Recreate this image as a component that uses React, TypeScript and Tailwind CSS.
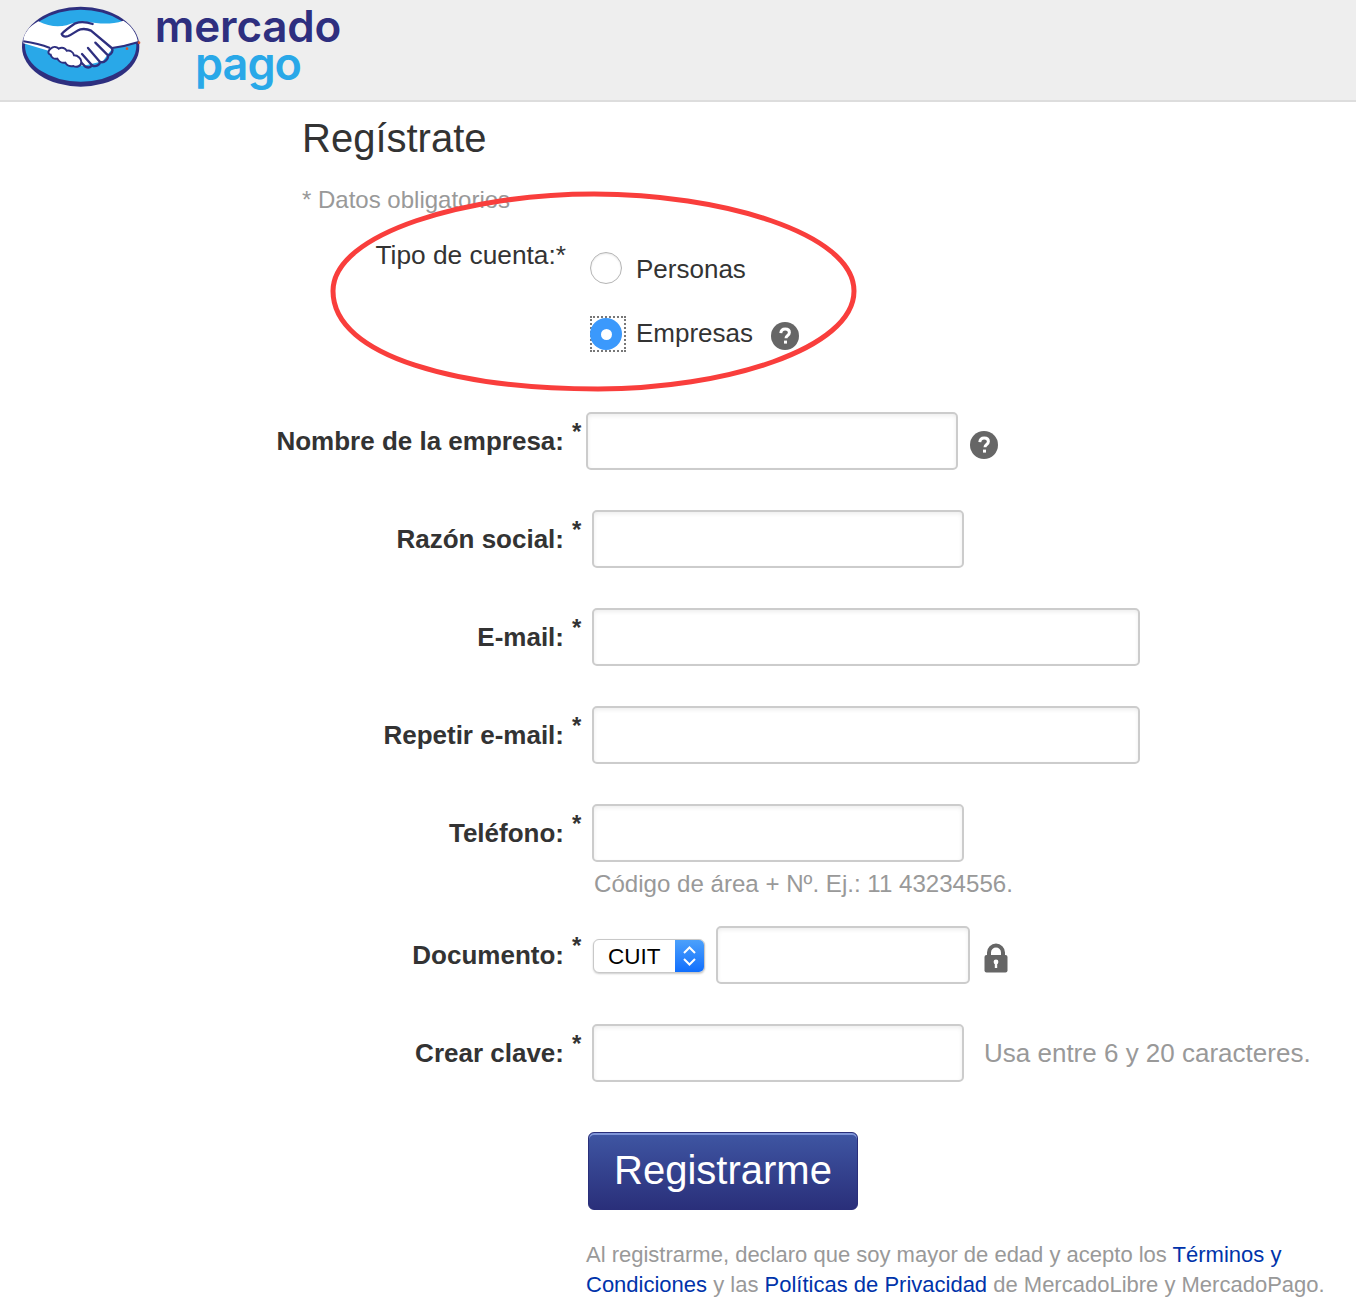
import React from "react";

const font = { fontFamily: '"Liberation Sans", Arial, sans-serif' };

const HelpIcon = () => (
  <svg width="28" height="28" viewBox="0 0 28 28" className="block">
    <circle cx="14" cy="14" r="14" fill="#666666" />
    <path d="M9.800 11.200c.2-2.800 2-4.200 4.400-4.200 2.500 0 4.200 1.400 4.200 3.500 0 1.600-.9 2.400-2 3.200-1 .7-1.400 1.200-1.400 2.500" fill="none" stroke="#fff" strokeWidth="3" />
    <rect x="13" y="18.600" width="3" height="3" fill="#fff" />
  </svg>
);

const LockIcon = () => (
  <svg width="24" height="30" viewBox="0 0 24 30" className="block">
    <path d="M5 13V9.500a7 7 0 0 1 14 0V13" fill="none" stroke="#666666" strokeWidth="4" />
    <rect x="0.500" y="12" width="23" height="17.500" rx="2" fill="#666666" />
    <circle cx="12" cy="19" r="2.400" fill="#fff" />
    <rect x="10.800" y="19" width="2.400" height="6" fill="#fff" />
  </svg>
);

const Logo = () => (
  <svg width="124" height="84" viewBox="0 0 372 252" className="block shrink-0">
    <ellipse cx="182" cy="128" rx="176" ry="120" fill="#2e2f7f" />
    <ellipse cx="182" cy="125" rx="167" ry="108" fill="#29a8e8" />
    {/* white band behind the hands */}
    <path d="M55 52c30 16 60 18 85 12 20-8 40-12 60-10 35 4 70 10 110-4 25 16 40 38 44 64l-76 18-30 40-60 14-100-45-78-23c-2-25 15-50 45-66z" fill="#fff" />
    <path d="M10 112c30 4 55 10 80 20" fill="none" stroke="#2e2f7f" strokeWidth="6" />
    <path d="M276 132c30-4 55-10 80-18" fill="none" stroke="#2e2f7f" strokeWidth="6" />
    {/* hands */}
    <g fill="none" stroke="#2e2f7f" strokeWidth="7" strokeLinecap="round" strokeLinejoin="round">
      <path d="M218 60c-18-6-36-8-52-2-12 8-30 20-41 32 4 8 12 9 20 6 14-6 24-16 36-20 12-2 24 0 32 4l62 52c6 8 0 18-10 22" />
      <path d="M226 116l38 38c2 10-10 24-24 20l-36-42" />
      <path d="M240 174c0 8-12 16-24 10l-30-34" />
      <path d="M216 184c-4 6-12 8-20 4l-14-14" />
    </g>
    <path d="M92 134c8-8 18-6 24 0 10-6 20-2 24 6 10-2 20 4 22 14 12 0 22 10 22 20 0 12-14 18-24 12-10 2-20-2-24-10-10 2-20-4-24-12-10 2-18-4-20-12-10-2-8-12 0-18z" fill="#fff" stroke="#2e2f7f" strokeWidth="6" />
    <circle cx="321" cy="134" r="4" fill="#d9552b" />
    <circle cx="357" cy="116" r="4" fill="#d9552b" />
  </svg>
);

const Row = ({ label, className, children }: { label: string; className: string; children: React.ReactNode }) => (
  <div className={`flex items-start ${className}`}>
    <div className="w-[564px] shrink-0 text-right text-[26px] leading-[30px] font-bold text-[#333333] pt-[14px]">{label}</div>
    <div className="w-[28px] shrink-0 pl-[8px] text-[24px] leading-[24px] font-bold text-[#333333] pt-[8px]">*</div>
    {children}
  </div>
);

const Field = ({ className }: { className: string }) => (
  <input
    type="text"
    className={`h-[58px] shrink-0 rounded-[5px] border-2 border-[#cccccc] bg-white shadow-[inset_0_2px_4px_rgba(0,0,0,0.07)] ${className}`}
  />
);

export default function App() {
  return (
    <div className="relative w-[1356px] h-[1306px] bg-white overflow-hidden" style={font}>
      {/* header */}
      <header className="h-[102px] bg-[#eeeeee] border-b-2 border-[#dddddd] flex items-start pl-[20px] pt-[4px] gap-[10px]">
        <Logo />
        <div className="flex flex-col items-center w-[188px]" style={{ fontFamily: 'Inter, sans-serif' }}>
          <span className="text-[44px] leading-[44px] font-semibold text-[#2e2f7f] tracking-[-0.200px]">mercado</span>
          <span className="text-[45px] leading-[32px] font-semibold text-[#29a8e8] tracking-[-1px]">pago</span>
        </div>
      </header>

      <div className="pl-[302px]">
        <h1 className="pt-[13px] text-[40px] leading-[46px] text-[#333333]">Regístrate</h1>
        <p className="mt-[25px] text-[24px] leading-[28px] text-[#999999]">* Datos obligatorios</p>
      </div>

      {/* tipo de cuenta */}
      <div className="flex items-start mt-[16px]">
        <div className="w-[566px] shrink-0 text-right text-[26.300px] leading-[30px] text-[#333333] pt-[10px]">Tipo de cuenta:*</div>
        <div className="flex flex-col pl-[24px] pt-[22px] gap-[32px]">
          <label className="flex items-center h-[32px]">
            <span className="w-[32px] h-[32px] rounded-full border border-[#b5b5b5] shadow-[inset_0_1px_2px_rgba(0,0,0,0.1)] bg-white" />
            <span className="ml-[14px] mt-[2px] text-[26px] text-[#333333]">Personas</span>
          </label>
          <label className="flex items-center h-[36px]">
            <span className="w-[36px] h-[36px] border-2 border-dotted border-[#777777] flex items-center justify-start">
              <span className="w-[32px] h-[32px] -ml-[2px] shrink-0 rounded-full bg-[#3b99fc] flex items-center justify-center">
                <span className="w-[11px] h-[11px] rounded-full bg-white" />
              </span>
            </span>
            <span className="ml-[10px] mb-[2px] text-[26px] text-[#333333]">Empresas</span>
            <span className="ml-[18px] mt-[4px]"><HelpIcon /></span>
          </label>
        </div>
      </div>

      <Row label="Nombre de la empresa:" className="mt-[60px]">
        <div className="flex items-center -ml-[6px] gap-[12px]">
          <Field className="w-[372px]" />
          <span className="mt-[8px]"><HelpIcon /></span>
        </div>
      </Row>
      <Row label="Razón social:" className="mt-[40px]"><Field className="w-[372px]" /></Row>
      <Row label="E-mail:" className="mt-[40px]"><Field className="w-[548px]" /></Row>
      <Row label="Repetir e-mail:" className="mt-[40px]"><Field className="w-[548px]" /></Row>
      <Row label="Teléfono:" className="mt-[40px]"><Field className="w-[372px]" /></Row>
      <p className="pl-[594px] mt-[8px] text-[24.100px] leading-[28px] text-[#999999]">Código de área + Nº. Ej.: 11 43234556.</p>

      <Row label="Documento:" className="mt-[28px]">
        <div className="flex items-center">
          <div className="w-[112px] h-[34px] ml-[1px] mt-[2px] rounded-[6px] border border-[#c8c8c8] shadow-[0_1px_2px_rgba(0,0,0,0.2)] flex overflow-hidden bg-white">
            <span className="flex-1 pl-[14px] text-[22.500px] leading-[33px] text-black">CUIT</span>
            <span className="w-[29px] bg-gradient-to-b from-[#4ba0fb] to-[#0f6efd] flex items-center justify-center">
              <svg width="15" height="24" viewBox="0 0 15 24" fill="none" stroke="#fff" strokeWidth="2">
                <path d="M2 9l5.500-5.500L13 9" />
                <path d="M2 15l5.500 5.500L13 15" />
              </svg>
            </span>
          </div>
          <Field className="w-[254px] ml-[11px]" />
          <span className="ml-[14px] mt-[6px]"><LockIcon /></span>
        </div>
      </Row>

      <Row label="Crear clave:" className="mt-[40px]">
        <div className="flex items-center">
          <Field className="w-[372px]" />
          <span className="ml-[20px] text-[26px] text-[#999999]">Usa entre 6 y 20 caracteres.</span>
        </div>
      </Row>

      <div className="pl-[588px] mt-[50px]">
        <button className="block w-[270px] h-[78px] pb-[2px] rounded-[6px] border border-[#2a2f7a] bg-gradient-to-b from-[#3f56a3] to-[#2a2f7a] shadow-[inset_0_2px_0_#7f95d8] text-white text-[40px] leading-[70px]">
          Registrarme
        </button>
        <p className="mt-[30px] -ml-[2px] text-[22px] leading-[30px] text-[#999999] w-[760px]">
          Al registrarme, declaro que soy mayor de edad y acepto los <span className="text-[#0033aa]">Términos y</span>
          <br />
          <span className="text-[#0033aa]">Condiciones</span> y las <span className="text-[#0033aa]">Políticas de Privacidad</span> de MercadoLibre y MercadoPago.
        </p>
      </div>

      {/* red marker ellipse drawn over the form */}
      <svg className="absolute left-[328px] top-[188px] pointer-events-none" width="530" height="206" viewBox="0 0 530 206" fill="none">
        <path d="M266 6C392 6 526 45 526 103c0 58-130 98-256 98C135 201 5 170 5 103 5 45 140 6 266 6z" stroke="#f93e3c" strokeWidth="5" />
      </svg>
    </div>
  );
}
